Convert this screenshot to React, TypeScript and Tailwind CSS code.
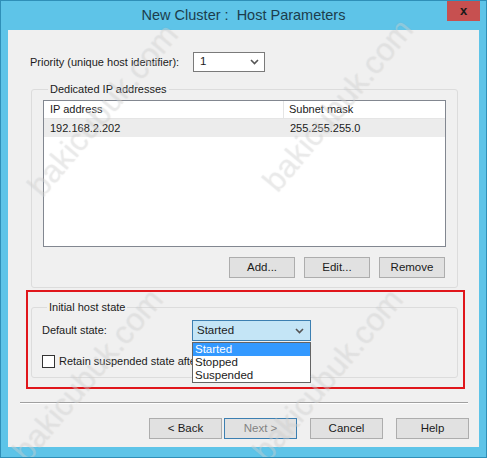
const font = { fontFamily: '"Liberation Sans", Arial, sans-serif' };

function Button({
  label,
  width = "w-[73px]",
  isDefault = false,
  disabled = false,
}: {
  label: string;
  width?: string;
  isDefault?: boolean;
  disabled?: boolean;
}) {
  return (
    <div
      className={`flex h-[21px] ${width} items-center justify-center border bg-[#e1e1e1] text-[11.5px] ${
        isDefault ? "border-[#3c7fb1]" : "border-[#adadad]"
      } ${disabled ? "text-[#838383]" : "text-[#1b1b1b]"}`}
    >
      {label}
    </div>
  );
}

function ChevronDown() {
  return (
    <svg width="9" height="6" viewBox="0 0 9 6" className="text-[#555]">
      <path d="M1 1 L4.5 4.5 L8 1" fill="none" stroke="currentColor" strokeWidth="1.6" />
    </svg>
  );
}

const watermarks = [
  { left: -5, top: 85 },
  { left: 230, top: 80 },
  { left: -20, top: 350 },
  { left: 220, top: 350 },
];

export default function App() {
  return (
    <div
      className="relative flex h-[458px] w-[487px] flex-col overflow-hidden border border-[#2f8fb8] bg-[#5ec4e8]"
      style={font}
    >
      {/* Title bar */}
      <div className="relative flex h-[29px] shrink-0 items-center justify-center">
        <span className="text-[14.5px] text-[#1c3d4c]">New Cluster :&nbsp; Host Parameters</span>
        <div className="absolute right-[6px] top-[-1px] flex h-[21px] w-[33px] items-center justify-center bg-[#c75050] text-[13px] font-bold text-[#1a1a1a]">
          x
        </div>
      </div>

      {/* Client area */}
      <div className="relative mx-[7px] flex h-[417px] flex-col bg-[#f0f0f0] text-[11px] text-[#1b1b1b]">
        {/* Priority */}
        <div className="mt-[22px] flex h-[20px] items-center pl-[22px]">
          <span className="w-[163px]">Priority (unique host identifier):</span>
          <div className="flex h-[20px] w-[72px] items-center justify-between border border-[#7a7a7a] bg-white pl-[6px] pr-[5px] text-[11.5px]">
            <span>1</span>
            <ChevronDown />
          </div>
        </div>

        {/* Dedicated IP addresses */}
        <fieldset className="ml-[23px] mt-[10px] h-[206px] w-[427px] rounded-[3px] border border-[#dcdcdc] px-[11px] pb-[8px]">
          <legend className="ml-[5px] px-[2px] leading-[14px]">Dedicated IP addresses</legend>
          <div className="mt-[4px] flex h-[147px] flex-col border border-[#828790] bg-white">
            <div className="flex h-[18px] border-b border-[#e5e5e5]">
              <div className="w-[240px] border-r border-[#e5e5e5] pl-[6px] leading-[17px]">IP address</div>
              <div className="pl-[5px] leading-[17px]">Subnet mask</div>
            </div>
            <div className="flex h-[18px] bg-[#ececec]">
              <div className="w-[240px] pl-[6px] leading-[18px]">192.168.2.202</div>
              <div className="pl-[6px] leading-[18px]">255.255.255.0</div>
            </div>
          </div>
          <div className="mt-[10px] flex justify-end gap-[9px] pr-[1px]">
            <Button label="Add..." width="w-[66px]" />
            <Button label="Edit..." width="w-[66px]" />
            <Button label="Remove" width="w-[66px]" />
          </div>
        </fieldset>

        {/* Initial host state (highlighted) */}
        <div className="relative ml-[18px] mt-[2px] h-[99px] w-[439px] border-2 border-[#e0161b] pl-[3px] pr-[5px]">
          <fieldset className="mt-[8px] h-[78px] w-[427px] rounded-[3px] border border-[#dcdcdc] pl-[10px]">
            <legend className="ml-[5px] px-[2px] leading-[14px]">Initial host state</legend>
            <div className="mt-[6px] flex h-[21px] items-center">
              <span className="w-[150px]">Default state:</span>
              <div className="flex h-[21px] w-[119px] items-center justify-between border border-[#3c7fb1] bg-[#c4e5f6] pl-[4px] pr-[6px] text-[11.5px]">
                <span>Started</span>
                <ChevronDown />
              </div>
            </div>
            <div className="mt-[12px] flex items-center gap-[4px]">
              <div className="h-[13px] w-[13px] border border-[#333] bg-white" />
              <span>Retain suspended state after computer restarts</span>
            </div>
          </fieldset>
          {/* open drop-down list */}
          <div className="absolute left-[164px] top-[50px] flex w-[119px] flex-col border border-[#646464] bg-white text-[11.5px] leading-[13px]">
            <div className="bg-[#3399ff] pl-[2px] text-white">Started</div>
            <div className="pl-[2px]">Stopped</div>
            <div className="pl-[2px]">Suspended</div>
          </div>
        </div>

        {/* Separator */}
        <div className="ml-[12px] mt-[13px] h-[2px] w-[448px] border-t border-b border-t-[#a0a0a0] border-b-white" />

        {/* Bottom buttons */}
        <div className="mt-[14px] flex justify-end pr-[10px]">
          <Button label="< Back" />
          <div className="ml-[2px]">
            <Button label="Next >" isDefault disabled />
          </div>
          <div className="ml-[13px]">
            <Button label="Cancel" />
          </div>
          <div className="ml-[13px]">
            <Button label="Help" />
          </div>
        </div>
      </div>

      {/* Watermark */}
      {watermarks.map((w, i) => (
        <div
          key={i}
          aria-hidden="true"
          className="pointer-events-none absolute -rotate-[50deg] select-none text-[32px] text-white/25 [text-shadow:0_0_1px_rgba(140,140,140,0.25)]"
          style={{ left: w.left, top: w.top, fontFamily: '"Liberation Sans", Arial, sans-serif' }}
        >
          bakicubuk.com
        </div>
      ))}
    </div>
  );
}
